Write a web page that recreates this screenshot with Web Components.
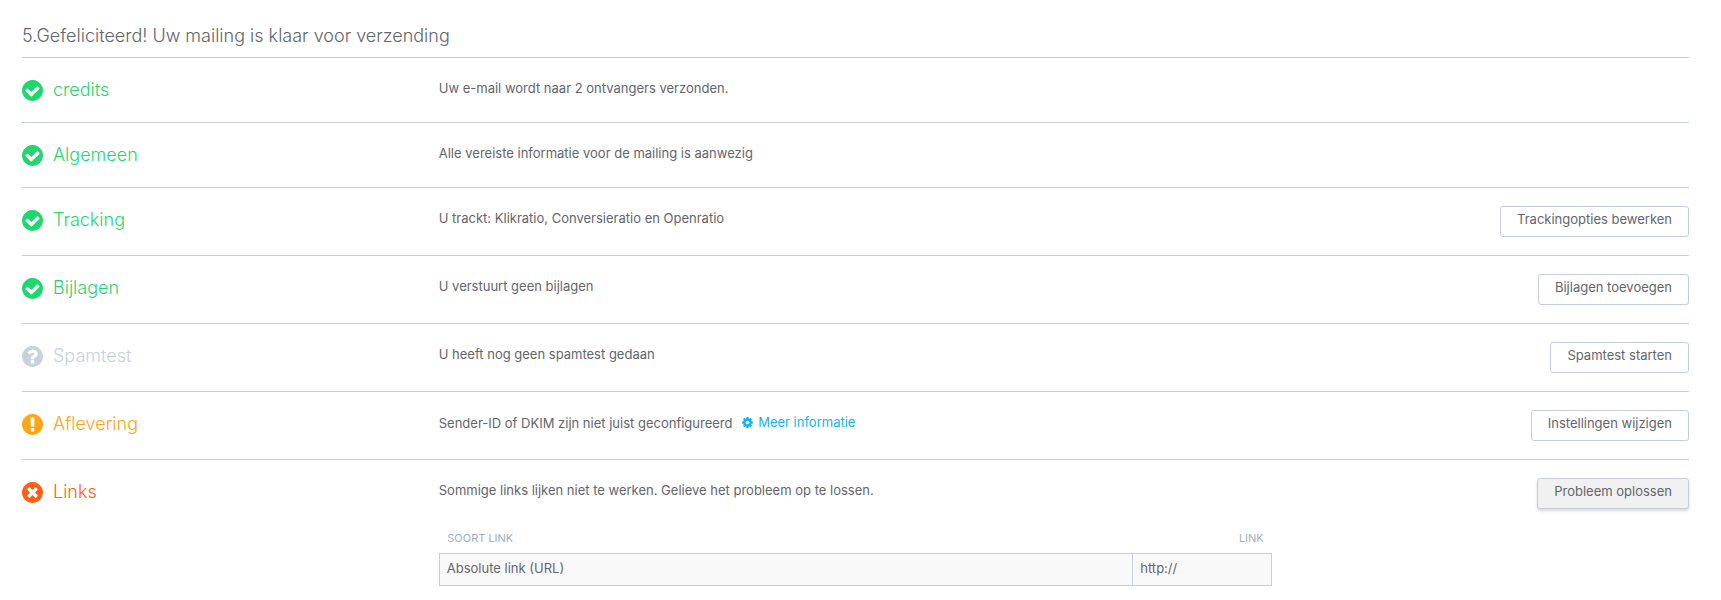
<!DOCTYPE html>
<html lang="nl">
<head>
<meta charset="utf-8">
<meta name="viewport" content="width=device-width, initial-scale=1">
<title>Mailing verzenden</title>
<style>
    body {
        margin: 0;
        padding: 20px 32px 14px 22px;
        background: #fff;
        color: #63656b;
        font: 13px/24px Inter, "Open Sans", sans-serif;
        --line: #c5ceda;
        --ok: #1fd76e;
        --unknown: #c9d1dd;
        --warning: #ffa412;
        --error: #ff5f10;
        --link: #16b0fb;
    }
</style>
</head>
<body>

<template id="checklistTemplate">
    <style>
        :host {
            display: block;
        }

        h1 {
            margin: 0;
            padding: 2px 0 7px;
            font-size: 18px;
            font-weight: 350;
            line-height: 28px;
        }
    </style>

    <h1><slot name="title"></slot></h1>
    <slot></slot>
</template>

<template id="rowTemplate">
    <style>
        :host {
            display: grid;
            grid-template-columns: 1fr 2fr 1fr;
            align-items: start;
            min-height: 28px;
            padding: 18px 0;
            border-top: 1px solid var(--line);
        }

        h2 {
            display: flex;
            align-items: center;
            gap: 10px;
            margin: 0;
            font-size: 18px;
            font-weight: 350;
            line-height: 28px;
        }

        :host([status="ok"]) h2 { color: var(--ok); }
        :host([status="unknown"]) h2 { color: var(--unknown); }
        :host([status="warning"]) h2 { color: var(--warning); }
        :host([status="error"]) h2 { color: var(--error); }

        .action {
            display: flex;
            justify-content: flex-end;
        }
    </style>

    <h2><status-icon></status-icon><slot name="label"></slot></h2>
    <div><slot></slot></div>
    <div class="action"><slot name="action"></slot></div>
</template>

<template id="buttonTemplate">
    <style>
        :host {
            display: block;
        }

        button {
            display: block;
            margin: 0;
            padding: 3px 16px 8px;
            border: 1px solid var(--line);
            border-radius: 3px;
            background: #fff;
            color: inherit;
            font: inherit;
            line-height: 18px;
            cursor: pointer;
        }

        button:hover,
        :host([active]) button {
            background: #f1f1f1;
            box-shadow: 0 2px 3px rgba(0, 0, 0, .15);
        }
    </style>

    <button type="button"><slot></slot></button>
</template>

<template id="moreTemplate">
    <style>
        :host {
            display: inline-block;
            margin-left: 6px;
        }

        a {
            display: inline-flex;
            align-items: center;
            gap: 5px;
            color: var(--link);
            text-decoration: none;
        }

        svg {
            width: 11px;
            height: 11px;
            fill: currentColor;
        }
    </style>

    <a href="#"><svg viewBox="128 128 1536 1536" aria-hidden="true"><path d="M1152 896q0-106-75-181t-181-75-181 75-75 181 75 181 181 75 181-75 75-181zm512-109v222q0 12-8 23t-20 13l-185 28q-19 54-39 91 35 50 107 138 10 12 10 25t-9 23q-27 37-99 108t-94 71q-12 0-26-9l-138-108q-44 23-91 38-16 136-29 186-7 28-36 28h-222q-14 0-24.5-8.5t-11.5-21.5l-28-184q-49-16-90-37l-141 107q-10 9-25 9-14 0-25-11-126-114-165-168-7-10-7-23 0-12 8-23 15-21 51-66.5t54-70.5q-27-50-41-99l-183-27q-13-2-21-12.5t-8-23.5v-222q0-12 8-23t19-13l186-28q14-46 39-92-40-57-107-138-10-12-10-24 0-10 9-23 26-36 98.5-107.5t94.5-71.5q13 0 26 10l138 107q44-23 91-38 16-136 29-186 7-28 36-28h222q14 0 24.5 8.5t11.5 21.5l28 184q49 16 90 37l142-107q9-9 24-9 13 0 25 10 129 119 165 170 7 8 7 22 0 12-8 23-15 21-51 66.5t-54 70.5q26 50 41 98l183 28q13 2 21 12.5t8 23.5z"/></svg><slot></slot></a>
</template>

<template id="linkTableTemplate">
    <style>
        :host {
            display: block;
            padding-top: 24px;
        }

        table {
            width: 100%;
            border-collapse: collapse;
            table-layout: fixed;
        }

        th {
            box-sizing: border-box;
            padding: 0 8px 3px;
            color: #9fb0be;
            font-size: 11px;
            font-weight: 400;
            text-align: left;
            text-transform: uppercase;
        }

        th:last-child {
            width: 139px;
            text-align: right;
        }

        td {
            padding: 2px 7px 5px;
            border: 1px solid var(--line);
            background: #f9f9f9;
        }
    </style>

    <table>
        <thead>
            <tr><th scope="col">Soort link</th><th scope="col">Link</th></tr>
        </thead>
        <tbody>
            <tr><td><slot name="kind"></slot></td><td><slot name="url"></slot></td></tr>
        </tbody>
    </table>
</template>

<mailing-checklist>
    <span slot="title">5.Gefeliciteerd! Uw mailing is klaar voor verzending</span>

    <check-row status="ok">
        <span slot="label">credits</span>
        Uw e-mail wordt naar 2 ontvangers verzonden.
    </check-row>

    <check-row status="ok">
        <span slot="label">Algemeen</span>
        Alle vereiste informatie voor de mailing is aanwezig
    </check-row>

    <check-row status="ok">
        <span slot="label">Tracking</span>
        U trackt: Klikratio, Conversieratio en Openratio
        <action-button slot="action">Trackingopties bewerken</action-button>
    </check-row>

    <check-row status="ok">
        <span slot="label">Bijlagen</span>
        U verstuurt geen bijlagen
        <action-button slot="action">Bijlagen toevoegen</action-button>
    </check-row>

    <check-row status="unknown">
        <span slot="label">Spamtest</span>
        U heeft nog geen spamtest gedaan
        <action-button slot="action">Spamtest starten</action-button>
    </check-row>

    <check-row status="warning">
        <span slot="label">Aflevering</span>
        Sender-ID of DKIM zijn niet juist geconfigureerd
        <more-link>Meer informatie</more-link>
        <action-button slot="action">Instellingen wijzigen</action-button>
    </check-row>

    <check-row status="error">
        <span slot="label">Links</span>
        Sommige links lijken niet te werken. Gelieve het probleem op te lossen.
        <link-table>
            <span slot="kind">Absolute link (URL)</span>
            <span slot="url">http://</span>
        </link-table>
        <action-button slot="action" active>Probleem oplossen</action-button>
    </check-row>
</mailing-checklist>

<script>
    (function mailingChecklist(customElements) {
        'use strict';

        const disc = 'M896 128q209 0 385.5 103t279.5 279.5 103 385.5-103 385.5-279.5 279.5-385.5 103-385.5-103-279.5-279.5-103-385.5 103-385.5 279.5-279.5 385.5-103z';

        // Symbols cut out of the disc
        const icons = {
            ok: 'M1412 734q0-28-18-46l-91-90q-19-19-45-19t-45 19l-408 407-226-226q-19-19-45-19t-45 19l-91 90q-18 18-18 46 0 27 18 45l362 362q19 19 45 19 27 0 46-19l543-543q18-18 18-45z',
            unknown: 'M1024 1376v-192q0-14-9-23t-23-9h-192q-14 0-23 9t-9 23v192q0 14 9 23t23 9h192q14 0 23-9t9-23zm256-672q0-88-55.5-163t-138.5-116-170-41q-243 0-371 213-15 24 8 42l132 100q7 6 19 6 16 0 25-12 53-68 86-92 34-24 86-24 48 0 85.5 26t37.5 59q0 38-20 61t-68 45q-63 28-115.5 86.5t-52.5 125.5v36q0 14 9 23t23 9h192q14 0 23-9t9-23q0-19 21.5-49.5t54.5-49.5q32-18 49-28.5t46-35 44.5-48 28-60.5 12.5-81z',
            warning: 'M1024 1375v-190q0-14-9-23.5t-22-9.5h-192q-13 0-23 10t-10 23v190q0 13 10 23t23 10h192q13 0 22-9.5t9-23.5zm-2-344l18-621q0-12-10-18-10-8-24-8h-220q-14 0-24 8-10 6-10 18l17 621q0 10 10 17.5t24 7.5h185q14 0 23.5-7.5t10.5-17.5z',
            error: 'M1277 1122q0-26-19-45l-181-181 181-181q19-19 19-45 0-27-19-46l-90-90q-19-19-46-19-26 0-45 19l-181 181-181-181q-19-19-45-19-27 0-46 19l-90 90q-19 19-19 46 0 26 19 45l181 181-181 181q-19 19-19 45 0 27 19 46l90 90q19 19 46 19 26 0 45-19l181-181 181 181q19 19 45 19 27 0 46-19l90-90q19-19 19-46z'
        };

        class TemplateElement extends HTMLElement {

            constructor() {
                super();
                const shadowRoot = this.attachShadow({ mode: 'open' });
                const templ = document.querySelector(this.constructor.template);
                shadowRoot.appendChild(document.importNode(templ.content, true));
            }

        }

        class StatusIcon extends HTMLElement {

            constructor() {
                super();
                this.attachShadow({ mode: 'open' });
            }

            static get observedAttributes() {
                return ['status'];
            }

            attributeChangedCallback(name, oldVal, newVal) {
                this.shadowRoot.innerHTML = `
                    <style>
                        :host { display: block; width: 21px; height: 21px; }
                        svg { display: block; fill: currentColor; }
                    </style>
                    <svg width="21" height="21" viewBox="128 128 1536 1536" aria-hidden="true">
                        <path fill-rule="evenodd" d="${disc}${icons[newVal] || ''}"/>
                    </svg>`;
            }

        }

        class MailingChecklist extends TemplateElement {
            static get template() { return '#checklistTemplate'; }
        }

        class CheckRow extends TemplateElement {

            static get template() { return '#rowTemplate'; }

            connectedCallback() {
                this.shadowRoot.querySelector('status-icon').setAttribute('status', this.getAttribute('status'));
            }

        }

        class ActionButton extends TemplateElement {
            static get template() { return '#buttonTemplate'; }
        }

        class MoreLink extends TemplateElement {
            static get template() { return '#moreTemplate'; }
        }

        class LinkTable extends TemplateElement {
            static get template() { return '#linkTableTemplate'; }
        }

        customElements.define('status-icon', StatusIcon);
        customElements.define('mailing-checklist', MailingChecklist);
        customElements.define('check-row', CheckRow);
        customElements.define('action-button', ActionButton);
        customElements.define('more-link', MoreLink);
        customElements.define('link-table', LinkTable);

    })(window.customElements);
</script>
</body>
</html>
